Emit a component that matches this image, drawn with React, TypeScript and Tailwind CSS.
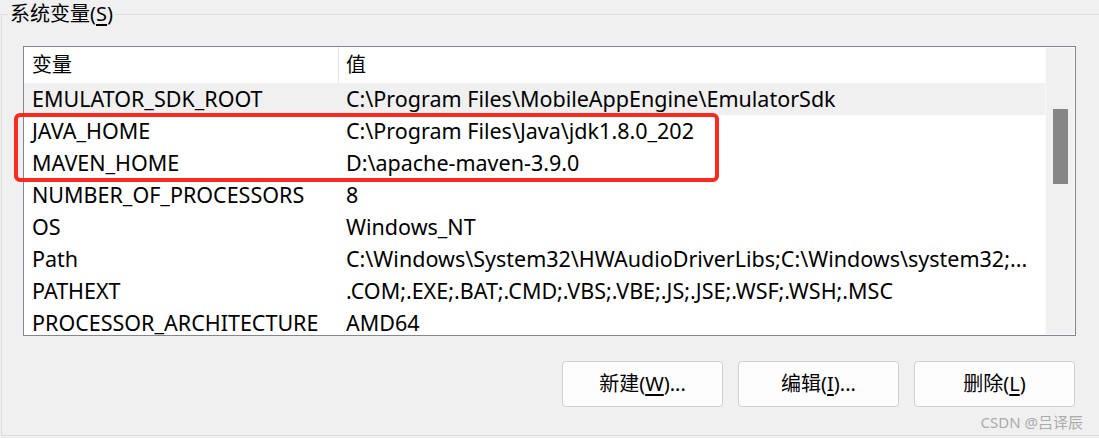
const rows: [string, string][] = [
  ['EMULATOR_SDK_ROOT', 'C:\\Program Files\\MobileAppEngine\\EmulatorSdk'],
  ['JAVA_HOME', 'C:\\Program Files\\Java\\jdk1.8.0_202'],
  ['MAVEN_HOME', 'D:\\apache-maven-3.9.0'],
  ['NUMBER_OF_PROCESSORS', '8'],
  ['OS', 'Windows_NT'],
  ['Path', 'C:\\Windows\\System32\\HWAudioDriverLibs;C:\\Windows\\system32;...'],
  ['PATHEXT', '.COM;.EXE;.BAT;.CMD;.VBS;.VBE;.JS;.JSE;.WSF;.WSH;.MSC'],
  ['PROCESSOR_ARCHITECTURE', 'AMD64'],
]

function Button({ label, mnemonic, tail }: { label: string; mnemonic: string; tail?: string }) {
  return (
    <button className="flex h-[46px] w-[161px] items-center justify-center rounded-[4px] border border-[#d0d0d0] bg-[#fdfdfd] text-[20px] text-black">
      {label}(<span className="underline underline-offset-[3px]">{mnemonic}</span>){tail}
    </button>
  )
}

export default function App() {
  return (
    <div className="relative h-[438px] w-[1099px] overflow-hidden bg-[#f0f0f0] font-['Noto_Sans','Noto_Sans_CJK_SC',sans-serif] text-black">
      <fieldset className="ml-[1px] h-[436px] w-[1120px] border border-[#dcdcdc]">
        <legend className="ml-[6px] px-[2px] text-[20px] leading-[28px]">
          系统变量(<span className="underline underline-offset-[3px]">S</span>)
        </legend>

        <div className="ml-[21px] mt-[18px] w-[1053px]">
          {/* list view */}
          <div className="flex h-[290px] border border-[#828790] bg-white">
            <div className="flex-1 overflow-hidden">
              <div className="flex h-[36px] items-center text-[20px]">
                <div className="h-full w-[315px] border-r border-[#e5e5e5] pl-[8px] leading-[36px]">变量</div>
                <div className="pl-[7px]">值</div>
              </div>
              {rows.map(([name, value], i) => (
                <div
                  key={name}
                  className={
                    i === 0
                      ? 'flex h-[32px] items-center whitespace-nowrap bg-[#f0f0f0] text-[21.5px]'
                      : 'flex h-[32px] items-center whitespace-nowrap text-[21.5px]'
                  }
                >
                  <div className="w-[315px] shrink-0 overflow-hidden pl-[8px]">{name}</div>
                  <div className="overflow-hidden pl-[7px] pr-[8px]">{value}</div>
                </div>
              ))}
            </div>
            {/* scrollbar */}
            <div className="w-[30px] border border-[#fafafa] bg-[#f0f0f0] pt-[61px]">
              <div className="ml-[7px] h-[75px] w-[15px] bg-[#868686]" />
            </div>
          </div>

          <div className="mt-[25px] flex justify-end gap-[15px] pr-[1px]">
            <Button label="新建" mnemonic="W" tail="..." />
            <Button label="编辑" mnemonic="I" tail="..." />
            <Button label="删除" mnemonic="L" />
          </div>
        </div>
      </fieldset>

      {/* annotation */}
      <div className="absolute left-[14px] top-[113px] h-[69px] w-[705px] rounded-[6px] border-4 border-[#fa2a1f]" />

      {/* watermark */}
      <div className="absolute right-[16px] top-[411px] text-[15px] text-[#ababab]">CSDN @吕译辰</div>
    </div>
  )
}
